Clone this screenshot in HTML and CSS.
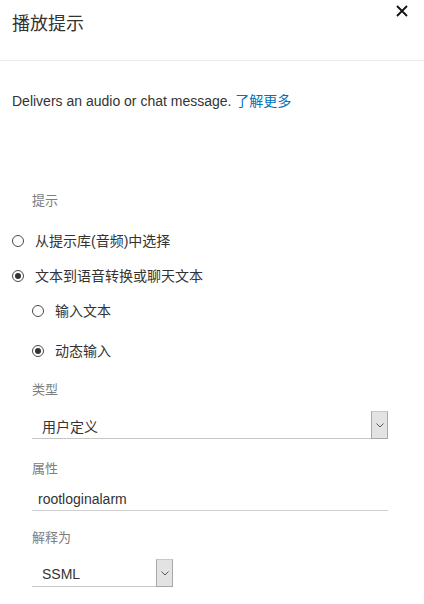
FILE: index.html
```html
<!DOCTYPE html>
<html lang="zh">
<head>
<meta charset="utf-8">
<link rel="stylesheet" href="styles.css">
</head>
<body>
<div class="panel">
  <header class="header">
    <h1 class="title">播放提示</h1>
    <button class="close" aria-label="关闭">
      <svg width="12" height="12" viewBox="0 0 12 12"><path d="M1 1 L11 11 M11 1 L1 11" stroke="#111" stroke-width="1.8" fill="none"/></svg>
    </button>
  </header>

  <p class="desc"><span class="desc-en">Delivers an audio or chat message.</span> <a class="link" href="#">了解更多</a></p>

  <div class="form">
    <div class="label label-indent">提示</div>

    <div class="radio-row first">
      <span class="radio"></span><span class="radio-text">从提示库(音频)中选择</span>
    </div>
    <div class="radio-row gap15">
      <span class="radio checked"></span><span class="radio-text">文本到语音转换或聊天文本</span>
    </div>

    <div class="sub">
      <div class="radio-row gap15">
        <span class="radio"></span><span class="radio-text">输入文本</span>
      </div>
      <div class="radio-row gap20">
        <span class="radio checked"></span><span class="radio-text">动态输入</span>
      </div>

      <div class="label mt20">类型</div>
      <div class="select wide">
        <span class="select-text">用户定义</span>
        <span class="arrow"><svg width="8" height="5" viewBox="0 0 8 5"><path d="M0.5 0.5 L4 4 L7.5 0.5" stroke="#555" stroke-width="1" fill="none"/></svg></span>
      </div>

      <div class="label mt21">属性</div>
      <div class="input">rootloginalarm</div>

      <div class="label mt18">解释为</div>
      <div class="select narrow">
        <span class="select-text">SSML</span>
        <span class="arrow"><svg width="8" height="5" viewBox="0 0 8 5"><path d="M0.5 0.5 L4 4 L7.5 0.5" stroke="#555" stroke-width="1" fill="none"/></svg></span>
      </div>
    </div>
  </div>
</div>
</body>
</html>
```

FILE: styles.css
```css
* { box-sizing: border-box; }
html, body { margin: 0; padding: 0; background: #fff; }
body {
  font-family: "Liberation Sans", Arial, "Noto Sans CJK SC", sans-serif;
  color: #333;
  font-size: 14px;
}
.panel { width: 424px; }

.header {
  height: 61px;
  border-bottom: 1px solid #eaeaea;
  display: flex;
  justify-content: space-between;
  align-items: flex-start;
  padding: 0 16px 0 12px;
}
.title {
  margin: 12px 0 0 0;
  font-size: 18px;
  line-height: 24px;
  font-weight: normal;
  color: #333;
}
.close {
  margin-top: 5px;
  width: 12px;
  height: 12px;
  padding: 0;
  border: 0;
  background: transparent;
  display: flex;
}

.desc {
  margin: 30px 0 0 12px;
  line-height: 20px;
  font-size: 14px;
}
.link { color: #0073bb; text-decoration: none; }

.form { margin-top: 81px; }
.label {
  font-size: 13px;
  line-height: 18px;
  color: #7d7d7d;
}
.label-indent { margin-left: 32px; }

.radio-row {
  display: flex;
  align-items: center;
  height: 20px;
  line-height: 20px;
  margin-left: 12px;
}
.radio-row.first { margin-top: 21px; }
.gap15 { margin-top: 15px; }
.gap20 { margin-top: 20px; }
.radio {
  width: 12px;
  height: 12px;
  border: 1px solid #4a4a4a;
  border-radius: 50%;
  position: relative;
  flex: none;
}
.radio.checked::after {
  content: "";
  position: absolute;
  left: 2px;
  top: 2px;
  width: 6px;
  height: 6px;
  border-radius: 50%;
  background: #333;
}
.radio-text { margin-left: 11px; }

.sub { margin-left: 32px; }
.sub .radio-row { margin-left: 0; }

.mt20 { margin-top: 20px; }
.mt21 { margin-top: 21px; }
.mt18 { margin-top: 18px; }

.select {
  margin-top: 12px;
  height: 28px;
  border-bottom: 1px solid #c6c6c6;
  display: flex;
  align-items: center;
  justify-content: space-between;
}
.select.wide { width: 356px; }
.select.narrow { width: 141px; }
.select-text { padding-left: 10px; padding-top: 3px; }
.arrow {
  align-self: stretch;
  width: 17px;
  margin-bottom: -1px;
  background: #e3e3e3;
  border: 1px solid #a8a8a8;
  border-top-color: #c8c8c8;
  display: flex;
  align-items: center;
  justify-content: center;
}

.input {
  margin-top: 10px;
  width: 356px;
  height: 23px;
  border-bottom: 1px solid #d0d0d0;
  padding-left: 6px;
  line-height: 22px;
}
```
